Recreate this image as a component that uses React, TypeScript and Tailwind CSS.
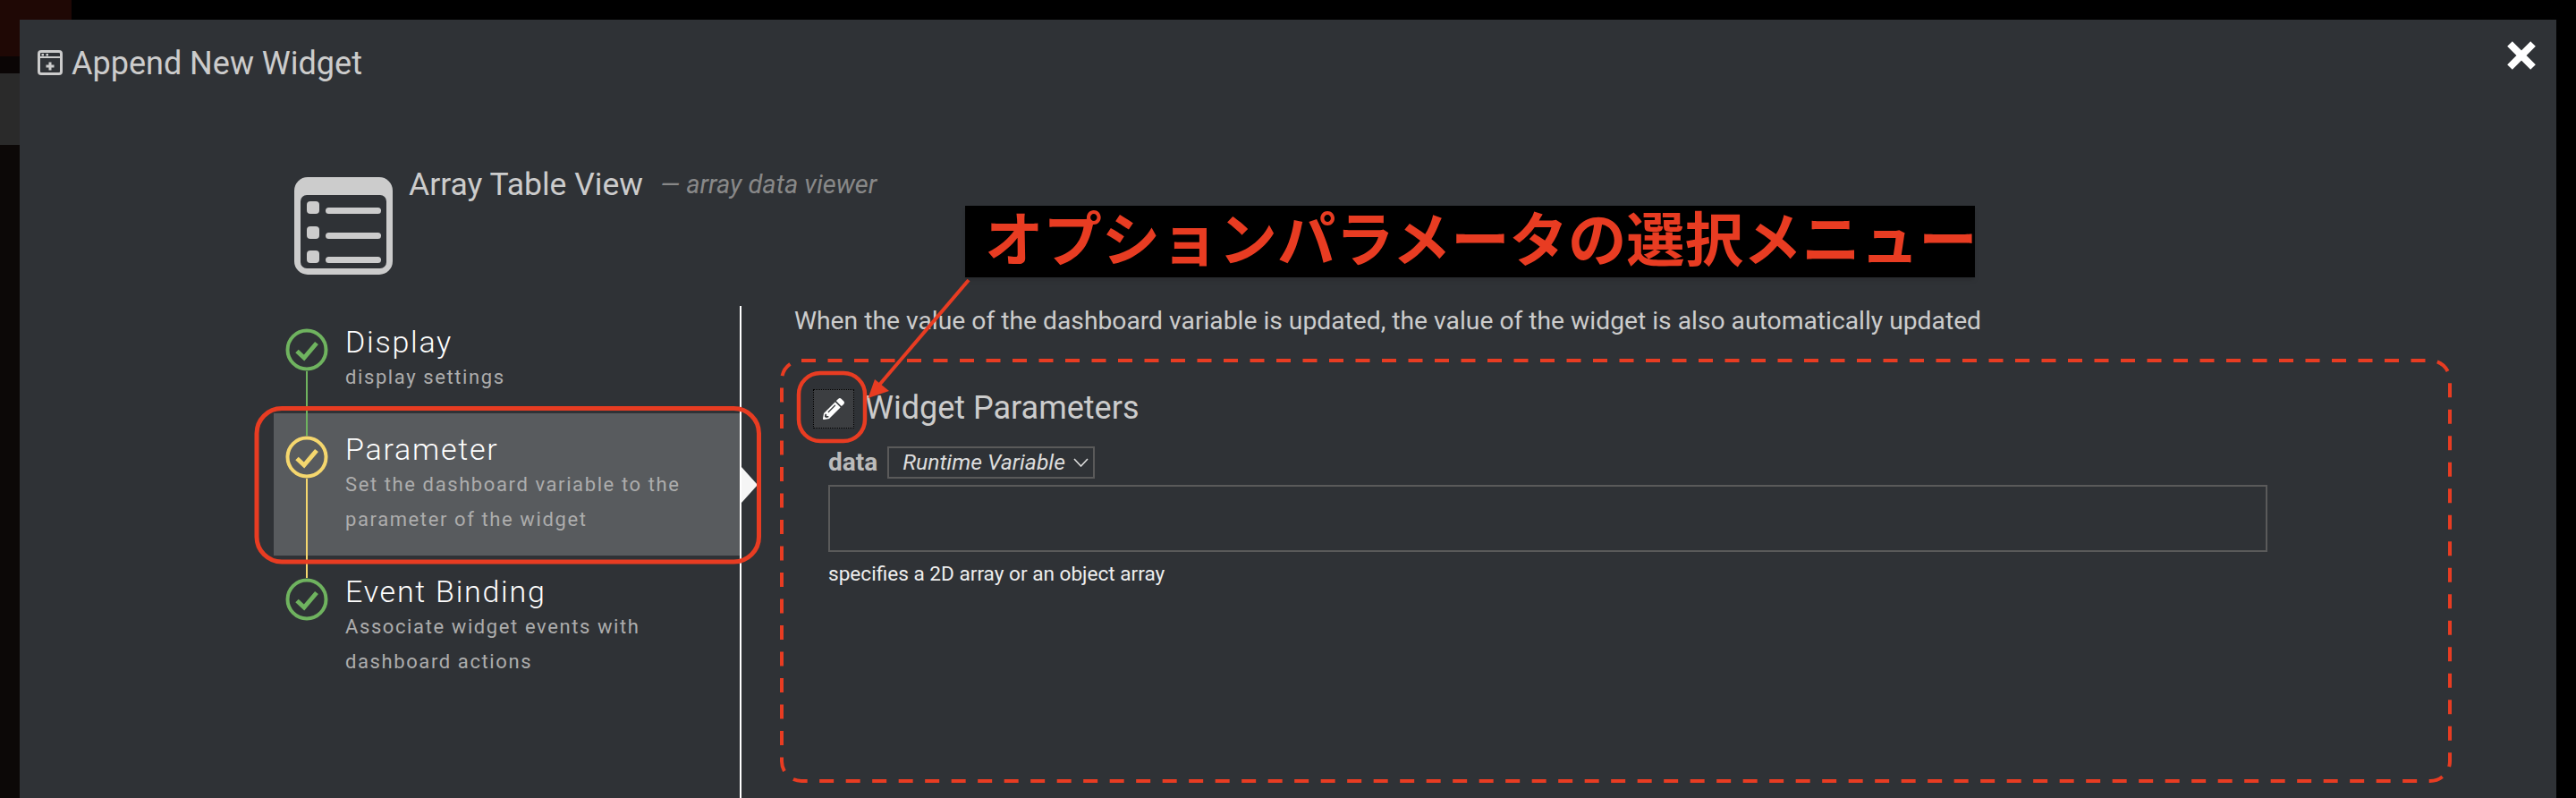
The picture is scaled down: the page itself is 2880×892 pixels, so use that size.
import { FaPencilAlt } from "react-icons/fa";

const steps = [
  {
    title: "Display",
    lines: ["display settings"],
    color: "#6fb35f",
    active: false,
  },
  {
    title: "Parameter",
    lines: ["Set the dashboard variable to the", "parameter of the widget"],
    color: "#f5d76e",
    active: true,
  },
  {
    title: "Event Binding",
    lines: ["Associate widget events with", "dashboard actions"],
    color: "#6fb35f",
    active: false,
  },
];

function StepCircle({ color }: { color: string }) {
  return (
    <svg width="48" height="48" viewBox="0 0 48 48" fill="none" className="shrink-0">
      <circle cx="24" cy="24" r="21.5" stroke={color} strokeWidth="4" />
      <path d="M13 25.5 L21 33 L35 16.5" stroke={color} strokeWidth="5" />
    </svg>
  );
}

function TableIcon() {
  return (
    <svg width="110" height="109" viewBox="0 0 110 109" className="shrink-0">
      <rect width="110" height="109" rx="15" fill="#cccccc" />
      <rect x="7" y="20" width="96" height="82" rx="7" fill="#2f3236" />
      {[27, 55, 82].map((y) => (
        <g key={y} fill="#cccccc">
          <rect x="14" y={y} width="14" height="14" rx="4" />
          <rect x="35" y={y + 7} width="62" height="7" rx="3.5" />
        </g>
      ))}
    </svg>
  );
}

function AddWindowIcon() {
  return (
    <svg width="28" height="28" viewBox="0 0 28 28" fill="none" className="shrink-0">
      <rect x="1.5" y="1.5" width="25" height="25" rx="2.5" stroke="#cccccc" strokeWidth="3" />
      <path d="M2 8 H26" stroke="#cccccc" strokeWidth="2" />
      <rect x="4.5" y="4" width="2.5" height="2.5" fill="#cccccc" />
      <rect x="9.5" y="4" width="2.5" height="2.5" fill="#cccccc" />
      <path d="M14 13.5 V22.5 M9.5 18 H18.5" stroke="#cccccc" strokeWidth="3" />
    </svg>
  );
}

function Annotations() {
  return (
    <svg
      width="2880"
      height="892"
      viewBox="0 0 2880 892"
      fill="none"
      className="absolute left-0 top-0 pointer-events-none"
    >
      <rect x="287" y="456.5" width="561.5" height="171.5" rx="28" stroke="#e83c22" strokeWidth="5" />
      <rect x="893" y="417" width="74" height="76" rx="24" stroke="#e83c22" strokeWidth="4.5" />
      <rect
        x="874"
        y="403"
        width="1865"
        height="470"
        rx="22"
        stroke="#e83c22"
        strokeWidth="4"
        strokeDasharray="16 13.5"
      />
      <path d="M1083 313 L979 435" stroke="#e83c22" strokeWidth="4" />
      <polygon points="970.5,445 978,424 994,437" fill="#e83c22" />
    </svg>
  );
}

export default function App() {
  return (
    <div className="relative flex h-[892px] w-[2880px] overflow-hidden bg-black font-['Roboto','Noto_Sans_CJK_JP',sans-serif]">
      {/* page behind the modal */}
      <div className="flex w-[22px] shrink-0 flex-col">
        <div className="h-[63px] bg-[#1f0805]" />
        <div className="h-[19px] bg-[#0a0505]" />
        <div className="h-[80px] bg-[#2a2a2a]" />
        <div className="flex-1 bg-[#0c0807]" />
      </div>
      <div className="absolute left-[22px] top-0 h-[22px] w-[58px] bg-[#1f0805]" />

      <div className="mt-[22px] flex h-[870px] w-[2836px] shrink-0 flex-col bg-[#2f3236] text-[#cccccc]">
        <div className="flex h-[176px] shrink-0 items-start justify-between pl-[20px] pr-[22px]">
          <div className="mt-[34px] flex h-[28px] items-center gap-[10px]">
            <AddWindowIcon />
            <h1 className="mt-[2px] text-[36px] leading-[40px]">Append New Widget</h1>
          </div>
          <svg width="34" height="34" viewBox="0 0 34 34" className="mt-[23px]">
            <path d="M4 4 L30 30 M30 4 L4 30" stroke="#ffffff" strokeWidth="8" />
          </svg>
        </div>

        <div className="ml-[307px] flex h-[144px] shrink-0 items-start gap-[18px]">
          <TableIcon />
          <div className="mt-[1px] flex h-[14px] items-center">
            <span className="text-[35.5px] leading-[40px]">Array Table View</span>
            <span className="ml-[19px] text-[29px] italic leading-[40px] text-[#888888]">— array data viewer</span>
          </div>
        </div>

        <div className="flex min-h-0 flex-1">
          <div className="ml-[284px] w-[523px] shrink-0 border-r-2 border-white">
            {steps.map((step, i) => (
              <div
                key={step.title}
                className={
                  step.active
                    ? "relative flex h-[159px] gap-[19px] bg-[#585b5e] pl-[13px]"
                    : "relative flex gap-[19px] pl-[13px] " + (i === 0 ? "h-[120px]" : "h-[140px]")
                }
              >
                <div className="flex w-[48px] shrink-0 flex-col items-center">
                  <div
                    className={i === 0 ? "h-[25px] w-[2px]" : "h-[25px] w-[2px] bg-[#6fb35f]"}
                    style={i === 2 ? { backgroundColor: "#f5d76e" } : undefined}
                  />
                  <StepCircle color={step.color} />
                  {i < 2 && <div className="w-[2px] flex-1" style={{ backgroundColor: step.color }} />}
                </div>
                <div className="pt-[20px]">
                  <div className="text-[34px] font-light leading-[40px] tracking-[1.75px] text-white">{step.title}</div>
                  {step.lines.map((line) => (
                    <div key={line} className="text-[22px] leading-[39px] tracking-[1.6px] text-[#adadad]">
                      {line}
                    </div>
                  ))}
                </div>
                {step.active && (
                  <div className="absolute left-full top-[60px] ml-[2px] h-0 w-0 border-y-[20px] border-l-[18px] border-y-transparent border-l-[#f5f5f5]" />
                )}
              </div>
            ))}
          </div>

          <div className="flex-1 pl-[59px]">
            <p className="pt-[1px] text-[28.25px] leading-[31px]">
              When the value of the dashboard variable is updated, the value of the widget is also automatically updated
            </p>
            <div className="ml-[21px] mt-[61px] flex h-[44px] items-center gap-[12px]">
              <button className="flex h-[44px] w-[46px] items-center justify-center border border-dotted border-black bg-[#3c3e41]">
                <FaPencilAlt className="h-[24px] w-[24px] text-white" />
              </button>
              <h2 className="-mt-[3px] text-[36px] leading-[40px]">Widget Parameters</h2>
            </div>
            <div className="ml-[38px] mt-[20px] flex h-[36px] items-center gap-[11px]">
              <span className="text-[28px] font-bold leading-[36px] text-[#bbbbbb]">data</span>
              <div className="flex h-[36px] w-[232px] items-center border-2 border-[#5a5a5a] pl-[15px] text-[24.75px] italic text-[#dddddd]">
                Runtime Variable
                <svg width="17" height="10" viewBox="0 0 17 10" fill="none" className="ml-[9px] shrink-0">
                  <path d="M1 1 L8.5 9 L16 1" stroke="#dddddd" strokeWidth="1.6" />
                </svg>
              </div>
            </div>
            <div className="ml-[38px] mt-[7px] h-[75px] w-[1609px] border-2 border-[#5a5a5a]" />
            <p className="ml-[38px] mt-[12px] text-[22.6px] leading-[26px] text-[#eeeeee]">specifies a 2D array or an object array</p>
          </div>
        </div>
      </div>

      <Annotations />

      <div className="absolute left-[1079px] top-[230px] flex h-[80px] w-[1129px] items-center whitespace-nowrap bg-black pl-[22px] text-[65.4px] font-bold leading-none text-[#e83c22] shadow-md">
        オプションパラメータの選択メニュー
      </div>
    </div>
  );
}
